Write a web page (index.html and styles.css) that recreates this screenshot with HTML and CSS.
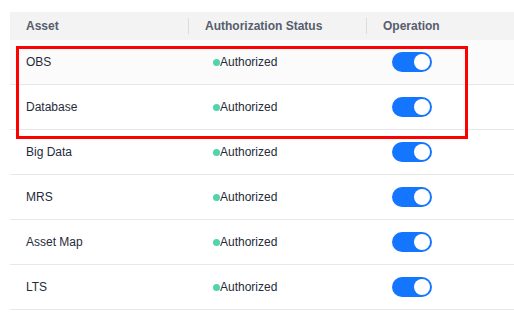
FILE: index.html
```html
<!DOCTYPE html>
<html lang="en">
<head>
  <meta charset="UTF-8" />
  <title>Asset Authorization</title>
  <link rel="stylesheet" href="styles.css">
</head>
<body>
<div class="asset-table">
  <div class="row head">
    <div class="cell">Asset</div>
    <div class="cell">Authorization Status</div>
    <div class="cell">Operation</div>
  </div>

  <!-- highlighted group -->
  <div class="group marked">
    <div class="row hover">
      <div class="cell">OBS</div>
      <div class="cell status"><i class="dot"></i>Authorized</div>
      <div class="cell op"><span class="switch on"></span></div>
    </div>
    <div class="row">
      <div class="cell">Database</div>
      <div class="cell status"><i class="dot"></i>Authorized</div>
      <div class="cell op"><span class="switch on"></span></div>
    </div>
  </div>

  <div class="row">
    <div class="cell">Big Data</div>
    <div class="cell status"><i class="dot"></i>Authorized</div>
    <div class="cell op"><span class="switch on"></span></div>
  </div>
  <div class="row">
    <div class="cell">MRS</div>
    <div class="cell status"><i class="dot"></i>Authorized</div>
    <div class="cell op"><span class="switch on"></span></div>
  </div>
  <div class="row">
    <div class="cell">Asset Map</div>
    <div class="cell status"><i class="dot"></i>Authorized</div>
    <div class="cell op"><span class="switch on"></span></div>
  </div>
  <div class="row">
    <div class="cell">LTS</div>
    <div class="cell status"><i class="dot"></i>Authorized</div>
    <div class="cell op"><span class="switch on"></span></div>
  </div>
</div>
</body>
</html>
```

FILE: styles.css
```css
:root { --accent:#1476ff; --text:#252b3a; --muted:#575d6c; --line:#e8e8e8; --ok:#50d4ab; }
*{box-sizing:border-box;margin:0;padding:0}
html,body{height:100%}
body{background:#fff;font-family:"Liberation Sans",Arial,sans-serif;font-size:12px;color:var(--text);padding:12px 0 0 10px;overflow:hidden}

.asset-table{width:504px}

.row{
  display:grid;
  grid-template-columns:178px 178px 1fr;
  height:45px;
  border-bottom:1px solid var(--line);
}
.row.hover{background:#fbfbfb}

.cell{display:flex;align-items:center;padding-left:16px;position:relative}

.row.head{height:28px;background:#f3f3f3;border-bottom:none;color:var(--muted);font-weight:bold}
.row.head .cell + .cell{padding-left:17px}
.row.head .cell + .cell::before{
  content:"";position:absolute;left:0;top:6px;width:1px;height:16px;background:#dcdcdc;
}

.status{padding-left:25px}
.dot{display:inline-block;width:7px;height:7px;border-radius:50%;background:var(--ok)}

.op{padding-left:26px}
.switch{display:inline-block;width:40px;height:20px;border-radius:10px;background:#d0d3d9;position:relative}
.switch::after{content:"";position:absolute;top:2px;left:2px;width:16px;height:16px;border-radius:50%;background:#fff}
.switch.on{background:var(--accent)}
.switch.on::after{left:22px}

.group{position:relative}
.group.marked::after{
  content:"";position:absolute;left:6px;top:6px;width:446px;height:87px;
  border:3px solid #ff0000;pointer-events:none;
}
```
